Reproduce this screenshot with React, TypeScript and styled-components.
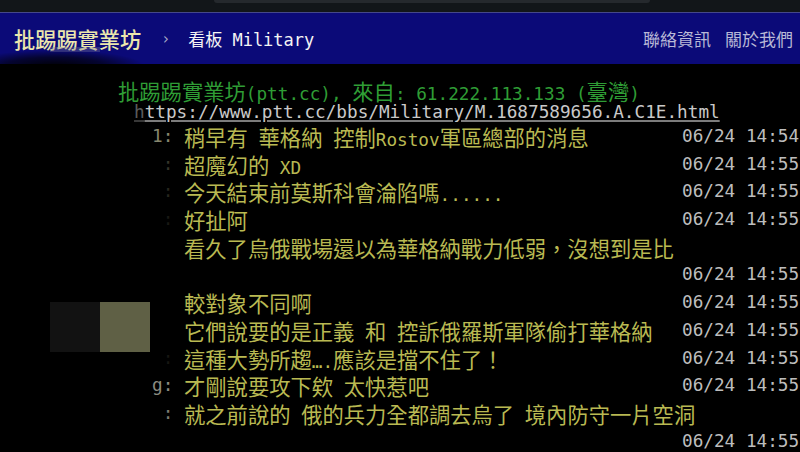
import React from "react";
import styled, { createGlobalStyle } from "styled-components";

const GlobalStyle = createGlobalStyle`
  html, body {
    margin: 0;
    padding: 0;
    background: #000;
  }
`;

const MONO = `"DejaVu Sans Mono", "Liberation Mono", monospace`;
const CJK_FONT = `"Noto Sans CJK TC", "Noto Sans CJK SC", sans-serif`;

const Page = styled.div`
  position: relative;
  width: 800px;
  height: 452px;
  overflow: hidden;
  background: #000;
`;

const TopStrip = styled.div`
  height: 12px;
  background: #121619;
  display: flex;
  padding-left: 214px;
`;

const StripTab = styled.div`
  width: 436px;
  height: 3px;
  background: #25292d;
  border-radius: 0 0 3px 3px;
`;

const Header = styled.header`
  box-sizing: border-box;
  height: 52px;
  background: #0b0a78;
  border-top: 1px solid #45488a;
  display: flex;
  align-items: center;
  padding: 0 7px 0 14px;
`;

const Logo = styled.div`
  font-family: ${CJK_FONT};
  font-size: 21.2px;
  font-weight: 500;
  color: #ebe7ad;
`;

const Crumb = styled.span`
  font-family: ${MONO};
  font-size: 15px;
  color: #a9a9c6;
  margin: 0 18px 0 20px;
`;

const BoardName = styled.div`
  font-family: ${MONO};
  font-size: 17px;
  color: #f4f4f4;

  & > span {
    font-family: ${CJK_FONT};
  }
`;

const Nav = styled.nav`
  margin-left: auto;
  display: flex;
  gap: 14px;
`;

const NavLink = styled.a`
  font-family: ${CJK_FONT};
  font-size: 17px;
  color: #b8b8d6;
  text-decoration: none;
`;

const Main = styled.main`
  padding-top: 15px;
  font-family: ${MONO};
  font-size: 17.7px;
  white-space: nowrap;
`;

const Wide = styled.span`
  font-family: ${CJK_FONT};
  font-size: 21.3px;
`;

const MetaLine = styled.div`
  height: 23px;
  line-height: 23px;
  padding-left: 118px;
  color: #2f9d35;
`;

const UrlLine = styled.div`
  height: 21px;
  line-height: 21px;
  padding-left: 134px;
`;

const UrlLink = styled.a`
  color: #c9c9c9;
  text-decoration: underline;
  text-decoration-color: #7c7c7c;
  text-decoration-thickness: 2px;
  text-underline-offset: 2px;
`;

const Faint = styled.span`
  opacity: 0.45;
`;

const Row = styled.div`
  display: flex;
  height: 27.7px;
  line-height: 27.7px;
`;

const Prefix = styled.span<{ $tone: string }>`
  width: 184px;
  flex-shrink: 0;
  text-align: right;
  color: ${({ $tone }) => $tone};
  white-space: pre;
`;

const Content = styled.span`
  flex: 1;
  color: #b9b952;
`;

const Stamp = styled.span`
  width: 118px;
  flex-shrink: 0;
  color: #bdbdbd;
`;

const MaskTiles = styled.div`
  position: absolute;
  left: 50px;
  top: 302px;
  display: flex;
`;

const Tile = styled.div<{ $color: string }>`
  width: 50px;
  height: 50px;
  background: ${({ $color }) => $color};
`;

const MaskShade = styled.div`
  position: absolute;
  left: 0;
  top: 50px;
  width: 180px;
  height: 34px;
  background: radial-gradient(
    ellipse 90px 16px at 55px 16px,
    rgba(0, 0, 0, 0.95),
    rgba(0, 0, 0, 0.6) 55%,
    rgba(0, 0, 0, 0) 100%
  );
`;

const MaskEdge = styled.div`
  position: absolute;
  left: 50px;
  top: 47px;
  width: 50px;
  height: 5px;
  background: rgba(120, 120, 150, 0.35);
`;

const CJK_RUN = /([\u3000-\u303f\u3400-\u9fff\uff00-\uffef]+)/;

function Mixed({ text }: { text: string }) {
  return (
    <>
      {text.split(CJK_RUN).map((part, i) =>
        i % 2 === 1 ? <Wide key={i}>{part}</Wide> : part,
      )}
    </>
  );
}

interface PushItem {
  id: string;
  tone: string;
  text: string;
  time?: string;
  wrap?: boolean;
}

const T = "06/24 14:55";

const pushes: PushItem[] = [
  { id: "1: ", tone: "#86866e", text: "稍早有 華格納 控制Rostov軍區總部的消息", time: "06/24 14:54" },
  { id: ": ", tone: "#34342a", text: "超魔幻的 XD", time: T },
  { id: ": ", tone: "#26261e", text: "今天結束前莫斯科會淪陷嗎......", time: T },
  { id: ": ", tone: "#181814", text: "好扯阿", time: T },
  { id: "", tone: "#000", text: "看久了烏俄戰場還以為華格納戰力低弱，沒想到是比", time: T, wrap: true },
  { id: "", tone: "#000", text: "較對象不同啊", time: T },
  { id: "", tone: "#000", text: "它們說要的是正義 和 控訴俄羅斯軍隊偷打華格納", time: T },
  { id: ": ", tone: "#161612", text: "這種大勢所趨….應該是擋不住了！", time: T },
  { id: "g: ", tone: "#8b8b80", text: "才剛說要攻下欸 太快惹吧", time: T },
  { id: ": ", tone: "#7a7a70", text: "就之前說的 俄的兵力全都調去烏了 境內防守一片空洞", time: T, wrap: true },
];

function Push({ item }: { item: PushItem }) {
  if (item.wrap) {
    return (
      <>
        <Row>
          <Prefix $tone={item.tone}>{item.id}</Prefix>
          <Content>
            <Mixed text={item.text} />
          </Content>
        </Row>
        <Row>
          <Prefix $tone={item.tone} />
          <Content />
          <Stamp>{item.time}</Stamp>
        </Row>
      </>
    );
  }
  return (
    <Row>
      <Prefix $tone={item.tone}>{item.id}</Prefix>
      <Content>
        <Mixed text={item.text} />
      </Content>
      <Stamp>{item.time}</Stamp>
    </Row>
  );
}

export default function App() {
  return (
    <Page>
      <GlobalStyle />
      <TopStrip>
        <StripTab />
      </TopStrip>
      <Header>
        <Logo>批踢踢實業坊</Logo>
        <Crumb>›</Crumb>
        <BoardName>
          <span>看板</span> Military
        </BoardName>
        <Nav>
          <NavLink>聯絡資訊</NavLink>
          <NavLink>關於我們</NavLink>
        </Nav>
      </Header>
      <Main>
        <MetaLine>
          <Mixed text="批踢踢實業坊(ptt.cc), 來自: 61.222.113.133 (臺灣)" />
        </MetaLine>
        <UrlLine>
          <UrlLink>
            <Faint>h</Faint>ttps://www.ptt.cc/bbs/Military/M.1687589656.A.C1E.html
          </UrlLink>
        </UrlLine>
        {pushes.map((item, i) => (
          <Push key={i} item={item} />
        ))}
      </Main>
      <MaskShade />
      <MaskEdge />
      <MaskTiles>
        <Tile $color="#121212" />
        <Tile $color="#5f6045" />
      </MaskTiles>
    </Page>
  );
}
